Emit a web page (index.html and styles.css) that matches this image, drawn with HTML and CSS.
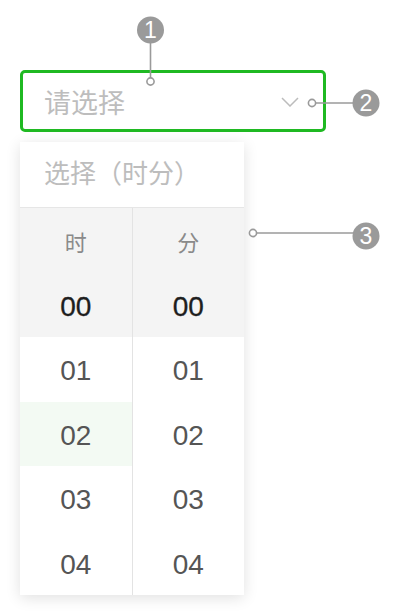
FILE: index.html
```html
<!DOCTYPE html>
<html lang="zh-CN">
<head>
    <meta charset="UTF-8">
    <meta name="viewport" content="width=device-width, initial-scale=1.0">
    <title>时间选择</title>
    <link rel="stylesheet" href="styles.css">
</head>
<body>
    <div class="page">
        <div class="picker-input">
            <span class="placeholder">请选择</span>
            <svg class="arrow" width="18" height="10" viewBox="0 0 18 10">
                <polyline points="1,1 9,9 17,1" fill="none" stroke="#bcbcbc" stroke-width="1.5"/>
            </svg>
        </div>

        <div class="panel">
            <div class="panel-title">选择（时分）</div>
            <div class="columns">
                <div class="col">
                    <div class="cell head">时</div>
                    <div class="cell current">00</div>
                    <div class="cell">01</div>
                    <div class="cell hover">02</div>
                    <div class="cell">03</div>
                    <div class="cell">04</div>
                </div>
                <div class="col">
                    <div class="cell head">分</div>
                    <div class="cell current">00</div>
                    <div class="cell">01</div>
                    <div class="cell">02</div>
                    <div class="cell">03</div>
                    <div class="cell">04</div>
                </div>
            </div>
        </div>

        <!-- callouts -->
        <svg class="callouts" width="406" height="614" viewBox="0 0 406 614">
            <g stroke="#9a9a9a" stroke-width="1.6" fill="none">
                <line x1="150.5" y1="40" x2="150.5" y2="78"/>
                <circle cx="150.5" cy="81.5" r="3.6" fill="#fff"/>
                <line x1="316" y1="103" x2="356" y2="103"/>
                <circle cx="312" cy="103" r="3.6" fill="#fff"/>
                <line x1="257" y1="233" x2="356" y2="233"/>
                <circle cx="253" cy="233" r="3.6" fill="#fff"/>
            </g>
            <g fill="#9a9a9a">
                <circle cx="150.5" cy="30" r="13.5"/>
                <circle cx="366" cy="103" r="13.5"/>
                <circle cx="366" cy="236" r="13.5"/>
            </g>
            <g class="num" fill="#fff" text-anchor="middle">
                <text x="150.5" y="38">1</text>
                <text x="366" y="111">2</text>
                <text x="366" y="244">3</text>
            </g>
        </svg>
    </div>
</body>
</html>
```

FILE: styles.css
```css
body {
    margin: 0;
    background: #fff;
    font-family: "Liberation Sans", "Noto Sans CJK SC", sans-serif;
}

.page {
    position: relative;
    width: 406px;
    height: 614px;
    padding: 70px 0 0 20px;
    box-sizing: border-box;
}

.picker-input {
    width: 306px;
    height: 62px;
    box-sizing: border-box;
    border: 3px solid #1fb922;
    border-radius: 5px;
    display: flex;
    align-items: center;
    padding: 0 24px 0 21px;
}

.placeholder {
    flex: 1;
    font-size: 27px;
    color: #bdbdbd;
}

.arrow {
    display: block;
    margin-top: 2px;
}

.panel {
    width: 224px;
    margin-top: 10px;
    background: #fff;
    box-shadow: 0 3px 14px rgba(0, 0, 0, 0.12);
}

.panel-title {
    height: 65px;
    line-height: 65px;
    padding-left: 24px;
    font-size: 26px;
    color: #bdbdbd;
    border-bottom: 1px solid #e6e6e6;
}

.columns {
    display: flex;
}

.col {
    flex: 1;
}

.col + .col {
    border-left: 1px solid #e3e3e3;
}

.cell {
    height: 64.5px;
    box-sizing: border-box;
    padding-top: 4px;
    display: flex;
    align-items: center;
    justify-content: center;
    font-size: 28px;
    color: #555;
}

.cell.head {
    padding-top: 1px;
    font-size: 22px;
    color: #8a8a8a;
    background: #f4f4f4;
}

.cell.current {
    background: #f4f4f4;
    color: #1e1e1e;
    -webkit-text-stroke: 0.3px #1e1e1e;
}

.cell.hover {
    background: #f3faf3;
}

.callouts {
    position: absolute;
    left: 0;
    top: 0;
    pointer-events: none;
}

.num {
    font-size: 23px;
    font-family: "Liberation Sans", sans-serif;
}
```
